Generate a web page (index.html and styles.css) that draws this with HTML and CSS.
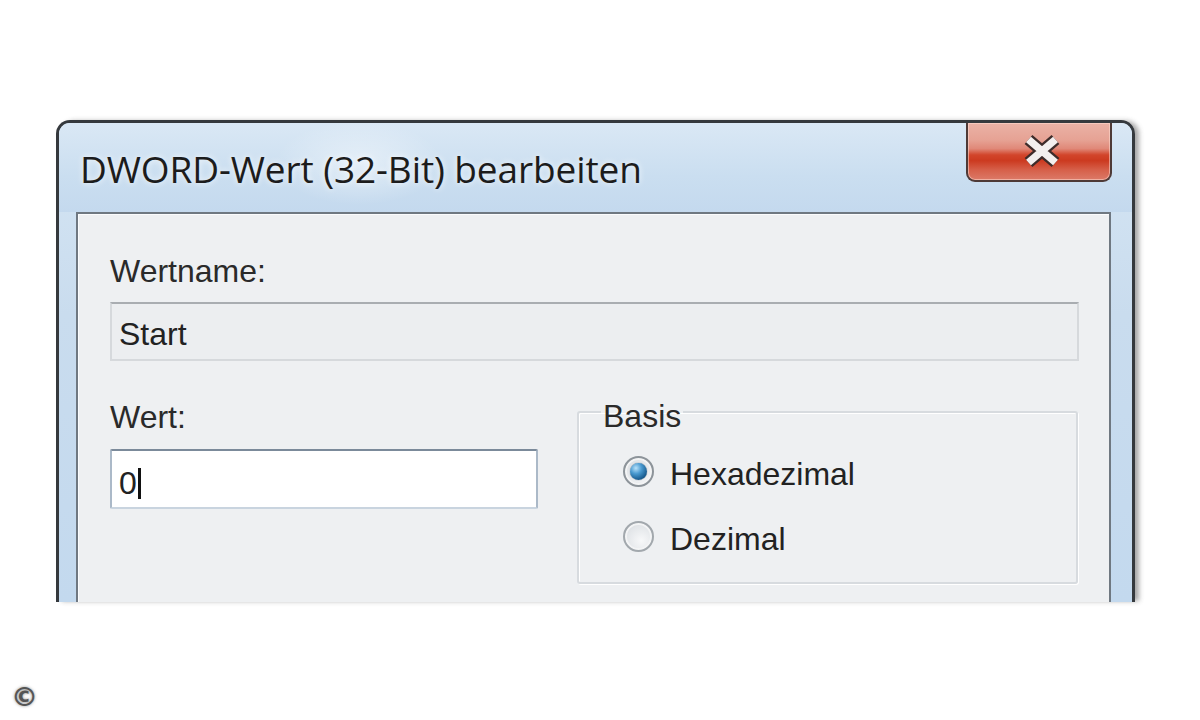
FILE: index.html
```html
<!DOCTYPE html>
<html lang="de">
<head>
<meta charset="utf-8">
<title>DWORD-Wert (32-Bit) bearbeiten</title>
<link rel="stylesheet" href="styles.css">
</head>
<body>
<div class="page">
  <div class="window">
    <div class="titlebar">
      <div class="title">DWORD-Wert (32-Bit) bearbeiten</div>
      <div class="close">
        <svg class="close-x" viewBox="0 0 44 36" width="44" height="36" aria-hidden="true">
          <path d="M8.5 6.5 L35.5 29.5 M35.5 6.5 L8.5 29.5" stroke="#3e2c2a" stroke-width="12" stroke-linecap="butt" fill="none"/>
          <path d="M8.5 6.5 L35.5 29.5 M35.5 6.5 L8.5 29.5" stroke="#f3efee" stroke-width="7.5" stroke-linecap="butt" fill="none"/>
        </svg>
      </div>
    </div>
    <div class="client">
      <div class="label label-name">Wertname:</div>
      <div class="readonly-box"><span class="field-text">Start</span></div>
      <div class="row">
        <div class="col-value">
          <div class="label label-value">Wert:</div>
          <div class="input-box"><span class="field-text">0</span><span class="caret"></span></div>
        </div>
        <fieldset class="group">
          <legend class="legend">Basis</legend>
          <div class="radio-row">
            <span class="radio checked"><span class="dot"></span></span>
            <span class="radio-label">Hexadezimal</span>
          </div>
          <div class="radio-row second">
            <span class="radio"></span>
            <span class="radio-label">Dezimal</span>
          </div>
        </fieldset>
      </div>
    </div>
  </div>
  <div class="footer"><span class="copyright">©</span></div>
</div>
</body>
</html>
```
FILE: styles.css
```css
html, body {
  margin: 0;
  padding: 0;
  background: #ffffff;
}

.page {
  width: 1200px;
  height: 720px;
  padding-top: 120px;
  box-sizing: border-box;
  overflow: hidden;
  font-family: "Liberation Sans", Arial, sans-serif;
  color: #222;
}

.window {
  margin-left: 56px;
  width: 1079px;
  height: 482px;
  box-sizing: border-box;
  border: 3px solid #35393d;
  border-bottom: none;
  border-radius: 14px 14px 0 0;
  background: linear-gradient(180deg, #d6e6f4 0%, #c9dcee 40%, #c3d9ee 100%);
  box-shadow: 5px 0 5px -1px rgba(60, 60, 60, 0.45);
  display: flex;
  flex-direction: column;
  overflow: hidden;
}

.titlebar {
  height: 89px;
  flex: none;
  display: flex;
  align-items: flex-start;
  justify-content: space-between;
  background:
    radial-gradient(ellipse 120px 60px at 300px 40px, rgba(255,255,255,0.45), rgba(255,255,255,0) 70%),
    linear-gradient(180deg, #dae8f5 0%, #cadef0 60%, #c4d9ee 100%);
}

.title {
  align-self: center;
  padding-left: 21px;
  font-family: "Open Sans", "Noto Sans", sans-serif;
  font-size: 37px;
  line-height: 50px;
  color: #1c1c1c;
  letter-spacing: -0.1px;
  text-shadow: 0 0 6px rgba(255, 255, 255, 0.9);
  margin-top: 2px;
}

.close {
  margin-right: 20px;
  width: 146px;
  height: 59px;
  box-sizing: border-box;
  border: 2px solid #4e3a37;
  border-top: none;
  border-radius: 0 0 9px 9px;
  background: linear-gradient(180deg,
    #eab2a6 0%, #e6a294 30%, #e08878 45%, #d2452b 56%, #cc3a20 66%, #d65f49 82%, #dc7a68 100%);
  box-shadow: inset 0 0 0 1px rgba(255, 220, 210, 0.55);
  display: flex;
  align-items: center;
  justify-content: center;
}

.close-x {
  display: block;
  margin-left: 5px;
  margin-top: -1px;
}

.client {
  flex: 1;
  margin: 0 21px 0 17px;
  border: 2px solid #6f7881;
  border-bottom: none;
  background: #eef0f2;
  padding: 0 30px 0 32px;
  box-shadow: inset 1px 1px 0 #fbfcfd;
}

.label {
  font-size: 32px;
  line-height: 36px;
  color: #2a2a2a;
}

.label-name {
  margin-top: 39px;
}

.readonly-box {
  margin-top: 13px;
  height: 59px;
  box-sizing: border-box;
  border: 2px solid #d6d9dc;
  border-top-color: #a9adb1;
  background: #eceef0;
  padding: 12px 0 0 7px;
}

.field-text {
  font-size: 32px;
  line-height: 36px;
  color: #222;
}

.row {
  display: flex;
  align-items: flex-start;
}

.col-value {
  width: 428px;
  flex: none;
}

.label-value {
  margin-top: 38px;
}

.input-box {
  margin-top: 14px;
  height: 60px;
  box-sizing: border-box;
  border: 2px solid #abb9c8;
  border-top-color: #7b8a9a;
  border-bottom-color: #c9d4df;
  border-radius: 2px;
  background: #ffffff;
  padding: 14px 0 0 7px;
  display: flex;
  align-items: flex-start;
}

.caret {
  display: inline-block;
  width: 3px;
  height: 31px;
  margin-top: 3px;
  margin-left: 1px;
  background: #111;
}

.group {
  margin: 29px 0 0 39px;
  padding: 22px 0 22px 44px;
  width: 501px;
  box-sizing: border-box;
  height: 194px;
  border: 2px solid #d7dbdf;
  border-radius: 3px;
  box-shadow: inset 1px 1px 0 #ffffff, 1px 1px 0 #ffffff;
  min-width: 0;
}

.legend {
  font-size: 32px;
  line-height: 36px;
  padding: 8px 2px 0 2px;
  margin-left: -22px;
  color: #2a2a2a;
}

.radio-row {
  display: flex;
  align-items: center;
  height: 36px;
}

.radio-row.second {
  margin-top: 29px;
}

.radio {
  width: 31px;
  height: 31px;
  box-sizing: border-box;
  border-radius: 50%;
  border: 2px solid #a2a8ad;
  background: radial-gradient(circle at 60% 65%, #f7f8f9 0%, #e3e6e9 60%, #cfd3d7 100%);
  box-shadow: inset 0 0 0 2px #f3f4f5;
  display: flex;
  align-items: center;
  justify-content: center;
  margin-top: -6px;
  flex: none;
}

.radio.checked {
  border-color: #8d949a;
}

.dot {
  width: 17px;
  height: 17px;
  border-radius: 50%;
  background: radial-gradient(circle at 35% 30%, #b9e2fa 0%, #4a9ad0 35%, #1b5f93 70%, #103f66 100%);
  box-shadow: 0 0 1px #0b3050;
}

.radio-label {
  margin-left: 16px;
  font-size: 32px;
  line-height: 36px;
  color: #222;
}

.footer {
  margin-top: 80px;
  padding-left: 11px;
  height: 30px;
}

.copyright {
  font-family: "DejaVu Sans", sans-serif;
  font-size: 27px;
  font-weight: bold;
  line-height: 30px;
  color: #555;
  text-shadow: 0 0 3px rgba(90, 90, 90, 0.7);
}
```
